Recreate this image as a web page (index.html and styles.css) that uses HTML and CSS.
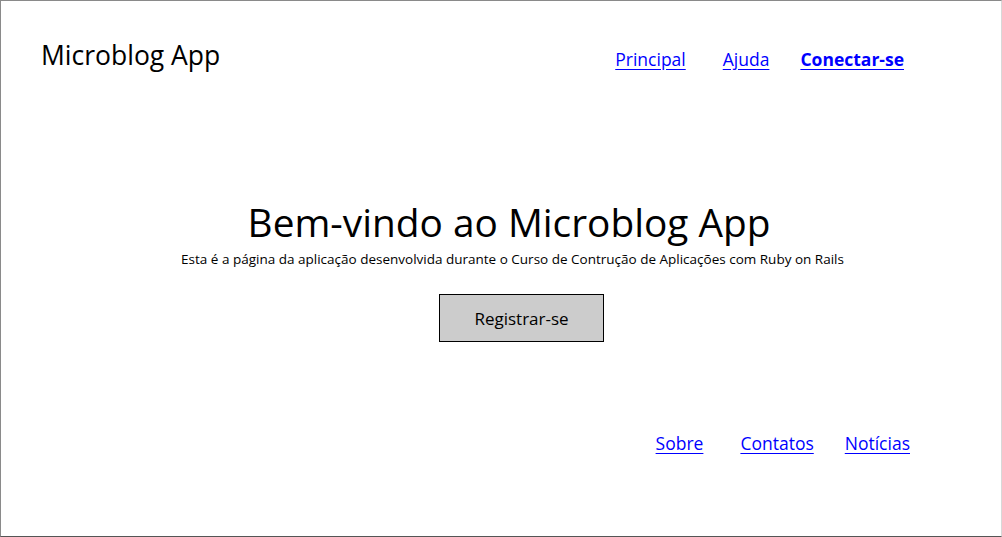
FILE: index.html
```html
<!DOCTYPE html>
<html lang="pt">
<head>
<meta charset="utf-8">
<title>Microblog App</title>
<link rel="stylesheet" href="styles.css">
</head>
<body>
<div class="frame">
  <header class="header">
    <div class="brand">Microblog App</div>
    <nav class="nav">
      <a href="#" class="nav-link principal">Principal</a>
      <a href="#" class="nav-link ajuda">Ajuda</a>
      <a href="#" class="nav-link conectar">Conectar-se</a>
    </nav>
  </header>
  <main class="hero">
    <h1 class="hero-title">Bem-vindo ao Microblog App</h1>
    <p class="hero-text">Esta é a página da aplicação desenvolvida durante o Curso de Contrução de Aplicações com Ruby on Rails</p>
    <button class="btn">Registrar-se</button>
  </main>
  <footer class="footer">
    <a href="#" class="foot-link">Sobre</a>
    <a href="#" class="foot-link">Contatos</a>
    <a href="#" class="foot-link">Notícias</a>
  </footer>
</div>
</body>
</html>
```

FILE: styles.css
```css
html, body {
  margin: 0;
  padding: 0;
  background: #ffffff;
}
body {
  font-family: "Comic Sans MS", "Open Sans", sans-serif;
  color: #000;
}
.frame {
  width: 1002px;
  height: 537px;
  box-sizing: border-box;
  border-top: 1px solid #8a8a8a;
  border-left: 1px solid #8a8a8a;
  border-right: 1px solid #d8d8d8;
  border-bottom: 1px solid #555;
  display: flex;
  flex-direction: column;
}
.header {
  display: flex;
  justify-content: space-between;
  align-items: flex-start;
  padding: 36px 97px 0 40px;
}
.brand {
  font-size: 26.5px;
  line-height: 36px;
}
.nav {
  display: flex;
  align-items: baseline;
  padding-top: 10px;
  line-height: 24px;
}
.nav-link, .foot-link {
  color: #0000ff;
  font-size: 17.5px;
  text-decoration: underline;
  text-underline-offset: 3px;
}
.ajuda { margin-left: 37px; }
.conectar { margin-left: 31px; font-weight: 700; }
.hero {
  display: flex;
  flex-direction: column;
  align-items: center;
  margin-top: 126px;
  padding-left: 16px;
}
.hero-title {
  margin: 0;
  font-size: 38.8px;
  font-weight: 400;
  line-height: 46px;
}
.hero-text {
  margin: 6px 0 0 7px;
  font-size: 13.5px;
  line-height: 16px;
}
.btn {
  margin: 27px 0 0 25px;
  width: 165px;
  height: 48px;
  background: #cccccc;
  border: 1px solid #000;
  font-family: inherit;
  font-size: 17px;
  color: #000;
  border-radius: 0;
  padding: 0;
}
.footer {
  display: flex;
  justify-content: flex-end;
  margin-top: 89px;
  padding-right: 91px;
}
.foot-link + .foot-link { margin-left: 37px; }
.foot-link:last-child { margin-left: 31px; }
```
